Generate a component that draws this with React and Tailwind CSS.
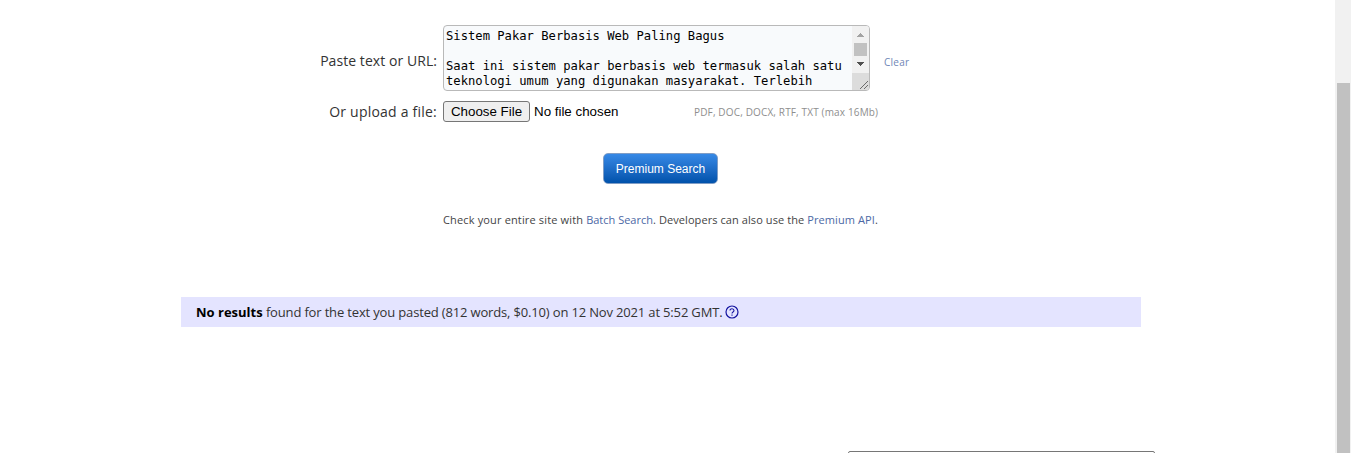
const link = 'text-[#4c69a5]';

function TextBox() {
  return (
    <div className="flex h-[66px] w-[427px] shrink-0 overflow-hidden rounded-[4px] border border-[#b9b9b9] bg-[#f8fafc]">
      <div className="min-w-0 flex-1 pl-[2px] pt-[3px] font-['DejaVu_Sans_Mono',monospace] text-[12.18px] leading-[15px] whitespace-pre text-black">
        <div>Sistem Pakar Berbasis Web Paling Bagus</div>
        <div className="h-[15px]" />
        <div>Saat ini sistem pakar berbasis web termasuk salah satu</div>
        <div>teknologi umum yang digunakan masyarakat. Terlebih</div>
      </div>
      <svg className="h-[64px] w-[17px] shrink-0" viewBox="0 0 17 64" shapeRendering="crispEdges">
        <path d="M0 0h17v47H0z" fill="#f1f1f1" />
        <path d="M0 47h17v17H0z" fill="#dcdcdc" />
        <path d="M8 7h1v1h1v1h1v1h1v1H5v-1h1V9h1V8h1z" fill="#a3a3a3" />
        <path d="M2 17h13v13H2z" fill="#c1c1c1" />
        <path d="M5 36h7v1h-1v1h-1v1H9v1H8v-1H7v-1H6v-1H5z" fill="#505050" />
        <path d="M8 62h1v1h-1zM9 61h1v1h-1zM10 60h1v1h-1zM11 59h1v1h-1zM12 58h1v1h-1zM13 57h1v1h-1zM14 56h1v1h-1zM15 55h1v1h-1zM12 62h1v1h-1zM13 61h1v1h-1zM14 60h1v1h-1zM15 59h1v1h-1z" fill="#6b6b6b" />
      </svg>
    </div>
  );
}

export default function App() {
  return (
    <div className="flex h-[453px] w-[1351px] overflow-hidden bg-white font-['Open_Sans',sans-serif] text-[#333]">
      <main className="flex w-[1335px] flex-col pl-[181px]">
        <div className="mt-[25px] flex h-[66px] items-center">
          <div className="mr-[6px] w-[256px] pb-[1px] pt-[7px] text-right text-[14px] leading-5">
            <span className="whitespace-nowrap tracking-[0.06px]">Paste text or URL:</span>
          </div>
          <TextBox />
          <a className="ml-[14px] pt-[8px] text-[10px] leading-4 tracking-[0.25px] text-[#6f86b6]">Clear</a>
        </div>
        <div className="mt-[10px] flex h-[21px] items-center">
          <div className="mr-[6px] w-[256px] text-right text-[14px] leading-5">
            <span className="whitespace-nowrap tracking-[0.22px]">Or upload a file:</span>
          </div>
          <button className="h-[21px] w-[87px] rounded-[3px] border border-[#767676] bg-[#efefef] font-['Liberation_Sans',sans-serif] text-[13.33px] leading-[19px] text-black">Choose File</button>
          <span className="ml-[4px] w-[160px] font-['Liberation_Sans',sans-serif] text-[13.33px] leading-5 text-black">No file chosen</span>
          <span className="whitespace-nowrap pt-[1px] text-[10px] leading-4 tracking-[0.15px] text-[#8e8e8e]">PDF, DOC, DOCX, RTF, TXT (max 16Mb)</span>
        </div>
        <button className="ml-[422px] mt-[31px] h-[31px] w-[115px] shrink-0 whitespace-nowrap rounded-[5px] border border-[#7f9dc6] bg-linear-to-b from-[#3689e6] to-[#0052ab] pt-[1px] font-['Liberation_Sans',sans-serif] text-[12px] text-white">Premium Search</button>
        <p className="ml-[262px] mt-[28px] h-4 whitespace-nowrap text-[11px] leading-4 text-[#444]">
          <span className="tracking-[0.15px]">Check your entire site with </span><a className={link}>Batch Search</a><span className="tracking-[0.08px]">. Developers can also use the </span><a className={`tracking-[0.1px] ${link}`}>Premium API</a>.
        </p>
        <div className="mt-[69px] flex h-[30px] w-[960px] shrink-0 items-center whitespace-pre bg-[#e4e4ff] pl-[15px] text-[13px]">
          <span className="pt-[1px]"><b className="text-black">No results</b><span className="tracking-[-0.16px]"> found for the text you pasted (812 words, $0.10) on 12 Nov 2021 at 5:52 GMT.</span></span>
          <svg className="ml-[3px] size-[14px]" viewBox="0 0 14 14" fill="none" stroke="#1414a0">
            <circle cx="7" cy="7" r="6" strokeWidth="1.2" />
            <path d="M5 5.6c0-2.6 4-2.5 4 0 0 1.4-2 1.3-2 2.8M7 9.4v1.3" strokeWidth="1.1" />
          </svg>
        </div>
        <div className="ml-[667px] mt-[124px] h-[21px] w-[307px] shrink-0 rounded-[2px] border border-[#767676] bg-white" />
      </main>
      <div className="w-4 bg-[#f1f1f1] pl-[2px] pt-[83px]">
        <div className="h-[370px] w-[13px] bg-[#c1c1c1]" />
      </div>
    </div>
  );
}
